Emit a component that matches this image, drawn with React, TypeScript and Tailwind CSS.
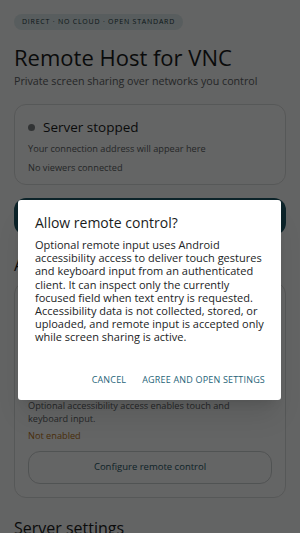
import React from "react";

export default function App() {
  const font = { fontFamily: "'Open Sans', sans-serif" };
  return (
    <div className="relative w-[300px] h-[533px] overflow-hidden bg-[#f8f9f9]" style={font}>
      <div className="px-[14px] pt-[14px] flex flex-col">
        <div className="self-start h-[16px] px-[8px] rounded-full bg-[#dbe9eb] text-[#1d3a41] text-[7px] tracking-[0.11em] flex items-center">
          DIRECT · NO CLOUD · OPEN STANDARD
        </div>
        <h1 className="mt-[13px] text-[22px] leading-[28px] text-[#1a1c1c]">Remote Host for VNC</h1>
        <p className="mt-[3px] text-[10.7px] leading-[14px] text-[#5c6264]">Private screen sharing over networks you control</p>

        <div className="mt-[16px] h-[81px] rounded-[12px] border border-[#d8dcdc] bg-[#fbfcfc] px-[13px] pt-[13px] flex flex-col">
          <div className="flex items-center gap-[8px]">
            <span className="w-[7px] h-[7px] rounded-full bg-[#7a7f82]"></span>
            <span className="text-[13.5px] leading-[19px] text-[#1a1c1c]">Server stopped</span>
          </div>
          <div className="mt-[6px] text-[9.2px] leading-[12px] text-[#5c6264]">Your connection address will appear here</div>
          <div className="mt-[7px] text-[9.2px] leading-[12px] text-[#5c6264]">No viewers connected</div>
        </div>

        <div className="mt-[13px] h-[37px] rounded-[12px] bg-[#1f5866] flex items-center justify-center text-white text-[12px]">
          Start sharing
        </div>

        <h2 className="mt-[20px] text-[16px] leading-[20px] text-[#1a1c1c]">Accessibility</h2>

        <div className="mt-[7px] h-[216px] rounded-[12px] border border-[#d8dcdc] bg-[#fbfcfc] px-[13px] pt-[14px] flex flex-col">
          <div className="h-[102px] flex flex-col">
            <div className="text-[14px] leading-[18px] text-[#1a1c1c]">Remote control</div>
          </div>
          <p className="pr-[20px] text-[9.2px] leading-[13px] text-[#5c6264]">Optional accessibility access enables touch and keyboard input.</p>
          <p className="mt-[5px] text-[9.2px] leading-[12px] text-[#b8741a]">Not enabled</p>
          <div className="mt-[9px] h-[33px] rounded-[12px] border border-[#c9cfd0] flex items-center justify-center text-[9.5px] text-[#1f5866]">
            Configure remote control
          </div>
        </div>

        <h2 className="mt-[20px] text-[16px] leading-[20px] text-[#1a1c1c]">Server settings</h2>
      </div>

      <div className="absolute inset-0 bg-black/60"></div>

      <div className="absolute left-[18px] top-[200px] w-[263px] h-[200px] bg-white rounded-[3px] shadow-xl pl-[17px] pr-[14px] pt-[13px] flex flex-col">
        <div className="text-[14px] leading-[20px] text-[#1a1c1c]">Allow remote control?</div>
        <p className="mt-[5px] text-[11px] leading-[13.2px] text-[#222425]">
          Optional remote input uses Android accessibility access to deliver touch gestures and keyboard input from an authenticated client. It can inspect only the currently focused field when text entry is requested. Accessibility data is not collected, stored, or uploaded, and remote input is accepted only while screen sharing is active.
        </p>
        <div className="mt-auto mb-[14px] flex justify-end gap-[16px] text-[9px] tracking-[0.02em] text-[#1f6479] pr-[2px]">
          <span>CANCEL</span>
          <span>AGREE AND OPEN SETTINGS</span>
        </div>
      </div>
    </div>
  );
}
